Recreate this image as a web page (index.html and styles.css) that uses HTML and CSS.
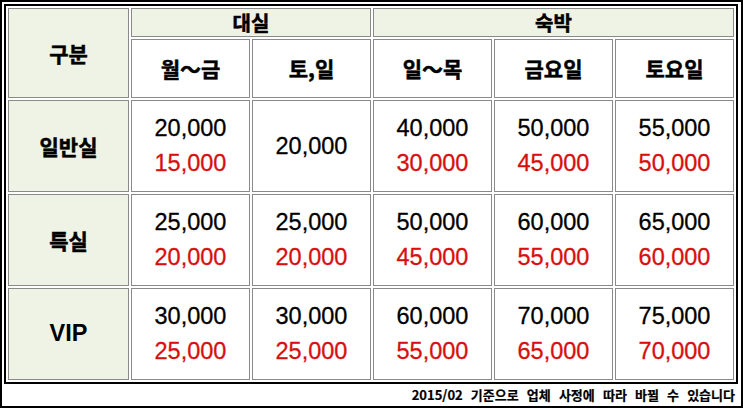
FILE: index.html
```html
<!DOCTYPE html>
<html lang="ko">
<head>
<meta charset="utf-8">
<link rel="stylesheet" href="styles.css">
</head>
<body>
<div class="frame">
  <table class="price">
    <colgroup>
      <col class="c-first">
      <col class="c">
      <col class="c">
      <col class="c">
      <col class="c">
      <col class="c">
    </colgroup>
    <tr class="r-top">
      <th rowspan="2" class="head">구분</th>
      <th colspan="2" class="head group">대실</th>
      <th colspan="3" class="head group">숙박</th>
    </tr>
    <tr class="r-days">
      <th class="day">월～금</th>
      <th class="day">토,일</th>
      <th class="day">일～목</th>
      <th class="day">금요일</th>
      <th class="day">토요일</th>
    </tr>
    <tr class="r-room">
      <th class="head room">일반실</th>
      <td><div class="n">20,000</div><div class="n red">15,000</div></td>
      <td><div class="n">20,000</div></td>
      <td><div class="n">40,000</div><div class="n red">30,000</div></td>
      <td><div class="n">50,000</div><div class="n red">45,000</div></td>
      <td><div class="n">55,000</div><div class="n red">50,000</div></td>
    </tr>
    <tr class="r-room">
      <th class="head room">특실</th>
      <td><div class="n">25,000</div><div class="n red">20,000</div></td>
      <td><div class="n">25,000</div><div class="n red">20,000</div></td>
      <td><div class="n">50,000</div><div class="n red">45,000</div></td>
      <td><div class="n">60,000</div><div class="n red">55,000</div></td>
      <td><div class="n">65,000</div><div class="n red">60,000</div></td>
    </tr>
    <tr class="r-room">
      <th class="head room vip">VIP</th>
      <td><div class="n">30,000</div><div class="n red">25,000</div></td>
      <td><div class="n">30,000</div><div class="n red">25,000</div></td>
      <td><div class="n">60,000</div><div class="n red">55,000</div></td>
      <td><div class="n">70,000</div><div class="n red">65,000</div></td>
      <td><div class="n">75,000</div><div class="n red">70,000</div></td>
    </tr>
  </table>
  <p class="note">2015/02 기준으로 업체 사정에 따라 바뀔 수 있습니다</p>
</div>
</body>
</html>
```

FILE: styles.css
```css
html, body {
  margin: 0;
  padding: 0;
  background: #fff;
}

.frame {
  box-sizing: border-box;
  width: 743px;
  height: 408px;
  border: 2px solid #000;
  padding: 2px;
  display: flex;
  flex-direction: column;
  font-family: "Noto Sans CJK KR", "Noto Sans", sans-serif;
}

.price {
  table-layout: fixed;
  width: 734px;
  border-collapse: separate;
  border-spacing: 2px;
  border: 2px solid #000;
}

.c-first { width: 121px; }
.c { width: 119px; }

.price th,
.price td {
  box-sizing: border-box;
  border: 1px solid #8a8a8a;
  padding: 0;
  text-align: center;
  vertical-align: middle;
}

.head {
  background: #eef3e6;
}

.price th {
  font-weight: 700;
  font-size: 21px;
  color: #000;
  line-height: 1;
  -webkit-text-stroke: 0.5px #000;
}

.price th.group {
  font-size: 20px;
}

.r-top { height: 29px; }
.r-days { height: 59px; }
.r-room { height: 92px; }

.day {
  background: #fff;
}

.price th.vip {
  font-family: "Liberation Sans", Arial, sans-serif;
  font-weight: 700;
  font-size: 23.5px;
  -webkit-text-stroke: 0;
}

.n {
  font-family: "Liberation Sans", Arial, sans-serif;
  font-size: 23.5px;
  line-height: 35px;
  color: #000;
  -webkit-text-stroke: 0.3px #000;
}

.n.red {
  color: #d70f0f;
  -webkit-text-stroke: 0.3px #d70f0f;
}

.note {
  margin: 0;
  flex: 1;
  display: flex;
  align-items: center;
  justify-content: flex-end;
  padding-right: 4px;
  font-size: 13px;
  font-weight: 700;
  word-spacing: 4.5px;
  color: #000;
  -webkit-text-stroke: 0.2px #000;
}
```
